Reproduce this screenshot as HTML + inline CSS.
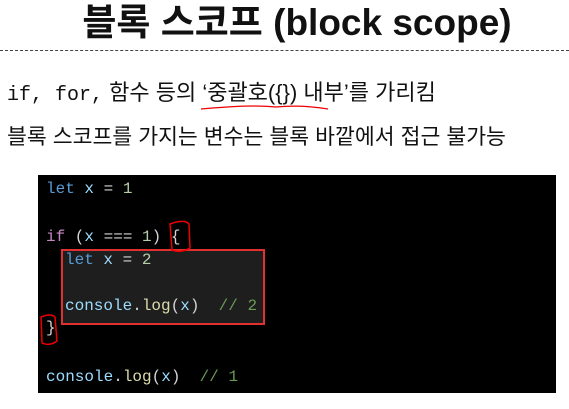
<!DOCTYPE html>
<html><head><meta charset="utf-8"><style>
body{margin:0;width:569px;height:409px;background:#fff;position:relative;overflow:hidden;font-family:"Liberation Sans","Noto Sans CJK KR",sans-serif;color:#111}
.a{position:absolute;white-space:pre}
.m{font-family:"Liberation Mono","DejaVu Sans Mono",monospace;font-size:20px}
.code{position:absolute;left:38px;top:175px;width:518px;height:218px;background:#000}
.c{position:absolute;font-family:"Liberation Mono","DejaVu Sans Mono",monospace;font-size:16px;white-space:pre;color:#d4d4d4;line-height:20px}
.k{color:#569cd6}.v{color:#9cdcfe}.n{color:#b5cea8}.p{color:#c586c0}.f{color:#dcdcaa}.g{color:#6a9955}
</style></head><body>
<div class="a" style="left:0;width:594px;text-align:center;top:0px;font-size:37px;font-weight:bold;line-height:46px">블록 스코프 (block scope)</div>
<div class="a" style="left:0;top:50px;width:569px;border-top:1.5px dashed #444"></div>
<div class="a" style="left:7px;top:79px;font-size:22px;line-height:28px"><span class="m">if, for,</span> 함수 등의 ‘중괄호({}) 내부’를 가리킴</div>
<svg class="a" style="left:196px;top:103px" width="140" height="12"><path d="M5 6 C40 3,60 2,80 4 C100 2,120 4,132 6" stroke="#e00" stroke-width="1.3" fill="none"/></svg>
<div class="a" style="left:7px;top:123px;font-size:21.6px;line-height:28px">블록 스코프를 가지는 변수는 블록 바깥에서 접근 불가능</div>
<div class="code"></div>
<div class="a" style="left:61px;top:249px;width:200px;height:72px;background:#1e1e1e;border:2px solid #e03030"></div>
<div class="c" style="left:46px;top:179px"><span class="k">let</span> <span class="v">x</span> = <span class="n">1</span></div>
<div class="c" style="left:46px;top:227px"><span class="p">if</span> (<span class="v">x</span> === <span class="n">1</span>) {</div>
<div class="c" style="left:65px;top:250px"><span class="k">let</span> <span class="v">x</span> = <span class="n">2</span></div>
<div class="c" style="left:65px;top:296px"><span class="v">console</span>.<span class="f">log</span>(<span class="v">x</span>)  <span class="g">// 2</span></div>
<div class="c" style="left:46px;top:318px">}</div>
<div class="c" style="left:46px;top:367px"><span class="v">console</span>.<span class="f">log</span>(<span class="v">x</span>)  <span class="g">// 1</span></div>
<svg class="a" style="left:0;top:0" width="569" height="409"><path d="M170 224 C178 221,186 220,189 224 L190 248 C184 252,176 252,172 250 Z" stroke="#e00" stroke-width="1.5" fill="none" stroke-linejoin="round"/><path d="M41 317 C46 315,52 314,55 317 L57 341 C52 345,46 345,42 343 Z" stroke="#e00" stroke-width="1.5" fill="none" stroke-linejoin="round"/></svg>
</body></html>
